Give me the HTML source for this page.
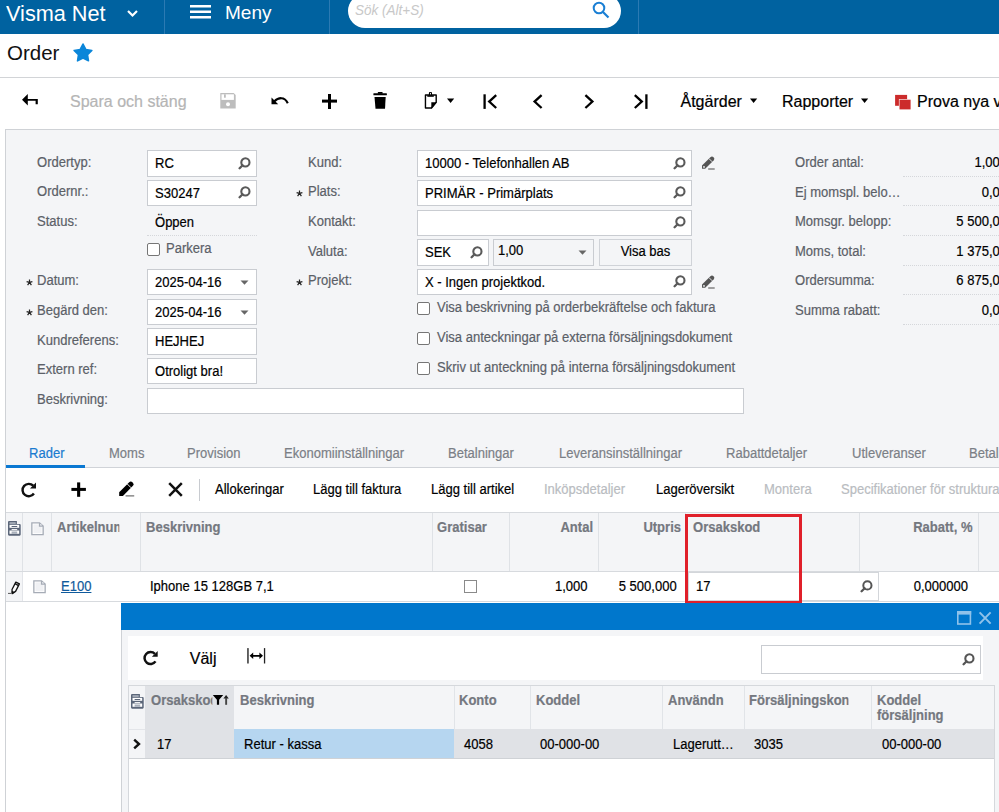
<!DOCTYPE html>
<html><head><meta charset="utf-8">
<style>
*{box-sizing:border-box;margin:0;padding:0}
html,body{width:999px;height:812px;overflow:hidden;background:#fff;font-family:"Liberation Sans",sans-serif;color:#000}
.a{position:absolute;white-space:nowrap}
#hdr{left:0;top:0;width:999px;height:34px;background:#0062a0}
.sep{position:absolute;top:0;width:1px;height:34px;background:#2b7ab3}
.t13{font-size:14px;line-height:15px;transform:scaleX(.93);transform-origin:0 0}
.t16{font-size:16px;line-height:18px}
.lbl{color:#5b6067}
.inp{position:absolute;background:#fff;border:1px solid #c9ccd1;height:26px}
.itx{position:absolute;font-size:14px;line-height:15px;color:#000;transform:scaleX(.93);transform-origin:0 0}
.dot{position:absolute;height:1px;border-top:1px dotted #d5d7db}
svg{position:absolute;display:block}
.a,.itx{-webkit-text-stroke:0.2px currentColor}
</style></head><body>
<!-- header -->
<div id="hdr" class="a"></div>
<div class="a" style="left:6px;top:1px;font-size:22px;line-height:25px;color:#fff;-webkit-text-stroke:0;transform:scaleX(.985);transform-origin:0 0">Visma Net</div>
<svg style="left:126px;top:9px" width="13" height="9" viewBox="0 0 13 9"><path d="M2 2 L6.5 6.5 L11 2" fill="none" stroke="#fff" stroke-width="2.2"/></svg>
<div class="sep" style="left:164px"></div>
<svg style="left:190px;top:4px" width="22" height="15" viewBox="0 0 22 15"><rect x="0" y="1" width="21" height="2.5" fill="#fff"/><rect x="0" y="6.5" width="21" height="2.5" fill="#fff"/><rect x="0" y="12" width="21" height="2.5" fill="#fff"/></svg>
<div class="a" style="left:225px;top:2px;font-size:19px;line-height:22px;color:#fff;-webkit-text-stroke:0">Meny</div>
<div class="sep" style="left:329px"></div>
<div class="a" style="left:348px;top:-6px;width:273px;height:34px;background:#fff;border-radius:17px"></div>
<div class="a" style="left:355px;top:1px;font-size:15px;line-height:18px;color:#c8c8c8;-webkit-text-stroke:0;font-style:italic;transform:scaleX(.9);transform-origin:0 0">Sök (Alt+S)</div>
<svg style="left:591px;top:1px" width="20" height="19" viewBox="0 0 20 19"><circle cx="8" cy="7" r="5.3" fill="none" stroke="#1a7fd4" stroke-width="2"/><path d="M12 11 L17.5 16.5" stroke="#1a7fd4" stroke-width="2.2"/></svg>
<div class="sep" style="left:638px"></div>

<!-- title -->
<div class="a" style="left:7px;top:41px;font-size:20.5px;line-height:23px;color:#111;-webkit-text-stroke:0">Order</div>
<svg style="left:70.5px;top:40.6px" width="24" height="24" viewBox="0 0 24 24"><path d="M12.00 3.00 L14.79 8.46 L20.84 9.43 L16.52 13.77 L17.47 19.82 L12.00 17.05 L6.53 19.82 L7.48 13.77 L3.16 9.43 L9.21 8.46 Z" fill="#0b86d9" stroke="#0b86d9" stroke-width="1.6" stroke-linejoin="round"/></svg>
<div class="a" style="left:0;top:77px;width:999px;height:1px;background:#d2d4d7"></div>

<!-- toolbar -->
<svg style="left:20px;top:92px" width="20" height="16" viewBox="0 0 20 16"><path d="M2 7.8 L7.8 2 V6.9 H17.8 V12.3 H15.6 V8.8 H7.8 V13.5 Z" fill="#000"/></svg>
<div class="a t16" style="left:70px;top:92.5px;color:#b5b5b5">Spara och stäng</div>
<svg style="left:220px;top:93px" width="16" height="16" viewBox="0 0 16 16"><path d="M0.3 0 H13.7 L15.7 2 V15.5 H0.3 Z" fill="#bdbdbd"/><rect x="1.5" y="1.3" width="12.4" height="5.6" fill="#fff"/><rect x="4" y="1.3" width="1.8" height="3.4" fill="#bdbdbd"/><circle cx="8" cy="11.3" r="2" fill="#fff"/></svg>
<svg style="left:270px;top:95px" width="20" height="12" viewBox="0 0 20 12"><path d="M1.5 2.5 L1.5 9.3 L8.2 9.3 Z" fill="#000"/><path d="M4.2 6.4 C8 2.6 14.5 1 17.8 8.2" fill="none" stroke="#000" stroke-width="2.1"/></svg>
<svg style="left:321px;top:93px" width="17" height="17" viewBox="0 0 17 17"><rect x="1" y="6.6" width="15" height="3" fill="#000"/><rect x="7" y="1" width="3" height="15" fill="#000"/></svg>
<svg style="left:372px;top:91px" width="17" height="19" viewBox="0 0 17 19"><rect x="1.4" y="2.3" width="13.5" height="2" rx=".5" fill="#000"/><rect x="5.8" y="1.1" width="4.8" height="1.6" rx=".5" fill="#000"/><path d="M2.5 5.9 H13.7 L13 17.7 H3.5 Z" fill="#000"/></svg>
<svg style="left:423px;top:91px" width="16" height="19" viewBox="0 0 16 19"><path d="M2.45 3.95 H13.2 V11.3 L8.5 16.95 H2.45 Z" fill="#fff" stroke="#000" stroke-width="1.4" stroke-linejoin="round"/><path d="M8.3 11.3 H13.9 L8.3 17.65 Z" fill="#000"/><rect x="4.3" y="4.2" width="6.5" height="1.6" fill="#000"/><rect x="5.9" y="1" width="3.1" height="3.6" rx="1" fill="#000"/><rect x="7" y="1.9" width=".9" height="1.5" fill="#fff"/></svg>
<svg style="left:446px;top:98px" width="9" height="6" viewBox="0 0 9 6"><path d="M1 0.6 H8.2 L4.6 5 Z" fill="#000"/></svg>
<svg style="left:482px;top:93px" width="17" height="17" viewBox="0 0 17 17"><path d="M2.6 1.3 V15.9" stroke="#000" stroke-width="2.3" fill="none"/><path d="M14.2 2.2 L7.2 8.6 L14.2 15" stroke="#000" stroke-width="2.3" fill="none"/></svg>
<svg style="left:531px;top:93px" width="14" height="17" viewBox="0 0 14 17"><path d="M10.6 2.2 L3.6 8.6 L10.6 15" stroke="#000" stroke-width="2.3" fill="none"/></svg>
<svg style="left:582px;top:93px" width="14" height="17" viewBox="0 0 14 17"><path d="M3.4 2.2 L10.4 8.6 L3.4 15" stroke="#000" stroke-width="2.3" fill="none"/></svg>
<svg style="left:632px;top:93px" width="17" height="17" viewBox="0 0 17 17"><path d="M14.4 1.3 V15.9" stroke="#000" stroke-width="2.3" fill="none"/><path d="M2.8 2.2 L9.8 8.6 L2.8 15" stroke="#000" stroke-width="2.3" fill="none"/></svg>
<div class="a t16" style="left:680.5px;top:92.5px;color:#000">Åtgärder</div>
<svg style="left:749px;top:98px" width="9" height="6" viewBox="0 0 9 6"><path d="M1 0.6 H8.2 L4.6 5 Z" fill="#000"/></svg>
<div class="a t16" style="left:782px;top:92.5px;color:#000">Rapporter</div>
<svg style="left:860px;top:98px" width="9" height="6" viewBox="0 0 9 6"><path d="M1 0.6 H8.2 L4.6 5 Z" fill="#000"/></svg>
<svg style="left:894px;top:93px" width="18" height="18" viewBox="0 0 18 18"><rect x="1.1" y="1.9" width="12" height="10.9" fill="#cc2b2b"/><rect x="4.9" y="6.1" width="12.3" height="10.9" fill="#fff"/><rect x="5.5" y="6.7" width="11.1" height="9.7" fill="#cc2b2b"/></svg>
<div class="a t16" style="left:917px;top:92.5px;color:#000">Prova nya versionen</div>


<!-- form panel -->
<div class="a" style="left:5px;top:129px;width:994px;height:339px;background:#f4f5f7;border-left:1px solid #cfd2d6;border-top:1px solid #cfd2d6"></div>
<div class="a t13 lbl" style="left:37px;top:155px">Ordertyp:</div>
<div class="a t13 lbl" style="left:37px;top:184px">Ordernr.:</div>
<div class="a t13 lbl" style="left:37px;top:214px">Status:</div>
<div class="a t13 lbl" style="left:37px;top:273px">Datum:</div><svg style="left:25.5px;top:278.5px" width="7" height="7" viewBox="0 0 7 7"><path d="M3.5 0.4 V3.4 M0.6 2.6 L3.5 3.4 L6.4 2.6 M1.6 6.2 L3.5 3.4 L5.4 6.2" stroke="#222" stroke-width="1.2" fill="none"/></svg>
<div class="a t13 lbl" style="left:37px;top:303px">Begärd den:</div><svg style="left:25.5px;top:308.5px" width="7" height="7" viewBox="0 0 7 7"><path d="M3.5 0.4 V3.4 M0.6 2.6 L3.5 3.4 L6.4 2.6 M1.6 6.2 L3.5 3.4 L5.4 6.2" stroke="#222" stroke-width="1.2" fill="none"/></svg>
<div class="a t13 lbl" style="left:37px;top:333px">Kundreferens:</div>
<div class="a t13 lbl" style="left:37px;top:362px">Extern ref:</div>
<div class="a t13 lbl" style="left:37px;top:392px">Beskrivning:</div>
<div class="inp" style="left:147px;top:150px;width:110px;height:27px;"></div><div class="itx" style="left:155px;top:155.7px">RC</div>
<svg style="left:238px;top:157px" width="13" height="13" viewBox="0 0 13 13"><circle cx="7.4" cy="5.4" r="4.1" fill="none" stroke="#5a5a5a" stroke-width="2.1"/><path d="M4.6 8.2 L1.6 11.2" stroke="#5a5a5a" stroke-width="2.3" stroke-linecap="round"/></svg>
<div class="inp" style="left:147px;top:180px;width:110px;height:26px;"></div><div class="itx" style="left:155px;top:185.7px">S30247</div>
<svg style="left:238px;top:186px" width="13" height="13" viewBox="0 0 13 13"><circle cx="7.4" cy="5.4" r="4.1" fill="none" stroke="#5a5a5a" stroke-width="2.1"/><path d="M4.6 8.2 L1.6 11.2" stroke="#5a5a5a" stroke-width="2.3" stroke-linecap="round"/></svg>
<div class="a t13" style="left:155px;top:215px;color:#000">Öppen</div>
<div class="dot" style="left:147px;top:235px;width:110px"></div>
<div class="a" style="left:147px;top:243px;width:13px;height:13px;border:1px solid #767676;border-radius:2px;background:#fff"></div>
<div class="a t13 lbl" style="left:165.5px;top:240.5px">Parkera</div>
<div class="inp" style="left:147px;top:269px;width:110px;height:26px;"></div><div class="itx" style="left:155px;top:274.7px">2025-04-16</div>
<svg style="left:240px;top:280px" width="9" height="6" viewBox="0 0 9 6"><path d="M0.5 0.5 H8.5 L4.5 4.8 Z" fill="#666"/></svg>
<div class="inp" style="left:147px;top:299px;width:110px;height:26px;"></div><div class="itx" style="left:155px;top:304.7px">2025-04-16</div>
<svg style="left:240px;top:310px" width="9" height="6" viewBox="0 0 9 6"><path d="M0.5 0.5 H8.5 L4.5 4.8 Z" fill="#666"/></svg>
<div class="inp" style="left:147px;top:328px;width:110px;height:27px;"></div><div class="itx" style="left:155px;top:333.7px">HEJHEJ</div>
<div class="inp" style="left:147px;top:358px;width:110px;height:26px;"></div><div class="itx" style="left:155px;top:363.7px">Otroligt bra!</div>
<div class="inp" style="left:147px;top:388px;width:597px;height:26px;"></div>
<div class="a t13 lbl" style="left:307.5px;top:155px">Kund:</div>
<div class="a t13 lbl" style="left:307.5px;top:184px">Plats:</div><svg style="left:296.0px;top:189.5px" width="7" height="7" viewBox="0 0 7 7"><path d="M3.5 0.4 V3.4 M0.6 2.6 L3.5 3.4 L6.4 2.6 M1.6 6.2 L3.5 3.4 L5.4 6.2" stroke="#222" stroke-width="1.2" fill="none"/></svg>
<div class="a t13 lbl" style="left:307.5px;top:214px">Kontakt:</div>
<div class="a t13 lbl" style="left:307.5px;top:244px">Valuta:</div>
<div class="a t13 lbl" style="left:307.5px;top:273px">Projekt:</div><svg style="left:296.0px;top:278.5px" width="7" height="7" viewBox="0 0 7 7"><path d="M3.5 0.4 V3.4 M0.6 2.6 L3.5 3.4 L6.4 2.6 M1.6 6.2 L3.5 3.4 L5.4 6.2" stroke="#222" stroke-width="1.2" fill="none"/></svg>
<div class="inp" style="left:417px;top:150px;width:275px;height:27px;"></div><div class="itx" style="left:425px;top:155.7px">10000 - Telefonhallen AB</div>
<svg style="left:673px;top:157px" width="13" height="13" viewBox="0 0 13 13"><circle cx="7.4" cy="5.4" r="4.1" fill="none" stroke="#5a5a5a" stroke-width="2.1"/><path d="M4.6 8.2 L1.6 11.2" stroke="#5a5a5a" stroke-width="2.3" stroke-linecap="round"/></svg>
<svg style="left:701px;top:155.5px" width="15" height="15" viewBox="0 0 15 15"><path d="M1 9.6 L9.4 1.2 A2.25 2.25 0 0 1 12.58 4.38 L4.2 12.8 H1 Z" fill="#555"/><path d="M8 2.6 L11.2 5.8" stroke="#f4f5f7" stroke-width=".9"/><circle cx="3" cy="10.9" r=".9" fill="#f4f5f7"/><rect x="7.2" y="12.2" width="6.5" height="1.6" fill="#8a8a8a"/></svg>
<div class="inp" style="left:417px;top:180px;width:275px;height:26px;"></div><div class="itx" style="left:425px;top:185.7px">PRIMÄR - Primärplats</div>
<svg style="left:673px;top:186px" width="13" height="13" viewBox="0 0 13 13"><circle cx="7.4" cy="5.4" r="4.1" fill="none" stroke="#5a5a5a" stroke-width="2.1"/><path d="M4.6 8.2 L1.6 11.2" stroke="#5a5a5a" stroke-width="2.3" stroke-linecap="round"/></svg>
<div class="inp" style="left:417px;top:210px;width:275px;height:26px;"></div>
<svg style="left:673px;top:216px" width="13" height="13" viewBox="0 0 13 13"><circle cx="7.4" cy="5.4" r="4.1" fill="none" stroke="#5a5a5a" stroke-width="2.1"/><path d="M4.6 8.2 L1.6 11.2" stroke="#5a5a5a" stroke-width="2.3" stroke-linecap="round"/></svg>
<div class="inp" style="left:417px;top:239px;width:72px;height:27px;"></div><div class="itx" style="left:425px;top:244.7px">SEK</div>
<svg style="left:470px;top:246px" width="13" height="13" viewBox="0 0 13 13"><circle cx="7.4" cy="5.4" r="4.1" fill="none" stroke="#5a5a5a" stroke-width="2.1"/><path d="M4.6 8.2 L1.6 11.2" stroke="#5a5a5a" stroke-width="2.3" stroke-linecap="round"/></svg>
<div class="inp" style="left:493px;top:239px;width:101px;height:27px;background:#f4f5f7"></div>
<div class="a t13" style="left:497.5px;top:242.5px;color:#000">1,00</div>
<svg style="left:578px;top:250px" width="9" height="6" viewBox="0 0 9 6"><path d="M0.5 0.5 H8.5 L4.5 4.8 Z" fill="#666"/></svg>
<div class="a" style="left:599px;top:239px;width:93px;height:27px;border:1px solid #d0d3d8;background:#f4f5f7"></div><div class="a t13" style="left:599px;top:244px;width:93px;text-align:center;transform-origin:50% 0;color:#000">Visa bas</div>
<div class="inp" style="left:417px;top:269px;width:275px;height:26px;"></div><div class="itx" style="left:425px;top:274.7px">X - Ingen projektkod.</div>
<svg style="left:673px;top:275px" width="13" height="13" viewBox="0 0 13 13"><circle cx="7.4" cy="5.4" r="4.1" fill="none" stroke="#5a5a5a" stroke-width="2.1"/><path d="M4.6 8.2 L1.6 11.2" stroke="#5a5a5a" stroke-width="2.3" stroke-linecap="round"/></svg>
<svg style="left:701px;top:274.5px" width="15" height="15" viewBox="0 0 15 15"><path d="M1 9.6 L9.4 1.2 A2.25 2.25 0 0 1 12.58 4.38 L4.2 12.8 H1 Z" fill="#555"/><path d="M8 2.6 L11.2 5.8" stroke="#f4f5f7" stroke-width=".9"/><circle cx="3" cy="10.9" r=".9" fill="#f4f5f7"/><rect x="7.2" y="12.2" width="6.5" height="1.6" fill="#8a8a8a"/></svg>
<div class="a" style="left:417px;top:302px;width:13px;height:13px;border:1px solid #767676;border-radius:2px;background:#fff"></div>
<div class="a t13 lbl" style="left:436.5px;top:299.5px">Visa beskrivning på orderbekräftelse och faktura</div>
<div class="a" style="left:417px;top:332px;width:13px;height:13px;border:1px solid #767676;border-radius:2px;background:#fff"></div>
<div class="a t13 lbl" style="left:436.5px;top:329.5px">Visa anteckningar på externa försäljningsdokument</div>
<div class="a" style="left:417px;top:362px;width:13px;height:13px;border:1px solid #767676;border-radius:2px;background:#fff"></div>
<div class="a t13 lbl" style="left:436.5px;top:359.5px">Skriv ut anteckning på interna försäljningsdokument</div>
<div class="a t13 lbl" style="left:794.5px;top:155px">Order antal:</div>
<div class="a t13" style="left:880px;top:155px;width:127px;text-align:right;transform-origin:100% 0;color:#000">1,000</div>
<div class="dot" style="left:903px;top:176px;width:96px"></div>
<div class="a t13 lbl" style="left:794.5px;top:185px">Ej momspl. belo…</div>
<div class="a t13" style="left:880px;top:185px;width:127px;text-align:right;transform-origin:100% 0;color:#000">0,00</div>
<div class="dot" style="left:903px;top:205px;width:96px"></div>
<div class="a t13 lbl" style="left:794.5px;top:214px">Momsgr. belopp:</div>
<div class="a t13" style="left:880px;top:214px;width:127px;text-align:right;transform-origin:100% 0;color:#000">5 500,00</div>
<div class="dot" style="left:903px;top:235px;width:96px"></div>
<div class="a t13 lbl" style="left:794.5px;top:244px">Moms, total:</div>
<div class="a t13" style="left:880px;top:244px;width:127px;text-align:right;transform-origin:100% 0;color:#000">1 375,00</div>
<div class="dot" style="left:903px;top:265px;width:96px"></div>
<div class="a t13 lbl" style="left:794.5px;top:273px">Ordersumma:</div>
<div class="a t13" style="left:880px;top:273px;width:127px;text-align:right;transform-origin:100% 0;color:#000">6 875,00</div>
<div class="dot" style="left:903px;top:294px;width:96px"></div>
<div class="a t13 lbl" style="left:794.5px;top:303px">Summa rabatt:</div>
<div class="a t13" style="left:880px;top:303px;width:127px;text-align:right;transform-origin:100% 0;color:#000">0,00</div>
<div class="dot" style="left:903px;top:324px;width:96px"></div>
<!-- tabs / grid -->
<div class="a" style="left:5px;top:468px;width:1px;height:344px;background:#cfd2d6"></div>
<div class="a t13" style="left:29.3px;top:446px;color:#1a7bd0">Rader</div>
<div class="a t13" style="left:108.5px;top:446px;color:#7b7f86">Moms</div>
<div class="a t13" style="left:186.5px;top:446px;color:#7b7f86">Provision</div>
<div class="a t13" style="left:283.5px;top:446px;color:#7b7f86">Ekonomiinställningar</div>
<div class="a t13" style="left:448px;top:446px;color:#7b7f86">Betalningar</div>
<div class="a t13" style="left:558.5px;top:446px;color:#7b7f86">Leveransinställningar</div>
<div class="a t13" style="left:726px;top:446px;color:#7b7f86">Rabattdetaljer</div>
<div class="a t13" style="left:851.5px;top:446px;color:#7b7f86">Utleveranser</div>
<div class="a t13" style="left:968.5px;top:446px;color:#7b7f86">Betalningsplan</div>
<div class="a" style="left:6px;top:467px;width:993px;height:1px;background:#d0d3d8"></div>
<div class="a" style="left:6px;top:465px;width:79px;height:3px;background:#0a78d2"></div>
<div class="a" style="left:6px;top:468px;width:993px;height:44px;background:#fff"></div>
<svg style="left:20px;top:481px" width="18" height="18" viewBox="0 0 18 18"><path d="M13.2 4.7 A6.2 6.2 0 1 0 13.9 12.5" fill="none" stroke="#111" stroke-width="2.4"/><path d="M16 1.6 V7.6 H10 Z" fill="#111"/></svg>
<svg style="left:70px;top:481px" width="17" height="17" viewBox="0 0 17 17"><rect x="1.4" y="6.9" width="14.5" height="3" fill="#000"/><rect x="7.1" y="1.4" width="3.1" height="14.4" fill="#000"/></svg>
<svg style="left:118px;top:481px" width="17.5" height="17.5" viewBox="0 0 15 15"><path d="M1 9.6 L9.4 1.2 A2.25 2.25 0 0 1 12.58 4.38 L4.2 12.8 H1 Z" fill="#000"/><path d="M8 2.6 L11.2 5.8" stroke="#fff" stroke-width=".8"/><rect x="6.5" y="12.2" width="7.4" height="1.1" fill="#777"/></svg>
<svg style="left:167px;top:481px" width="17" height="17" viewBox="0 0 17 17"><path d="M2.2 2.2 L14.8 14.8 M14.8 2.2 L2.2 14.8" stroke="#111" stroke-width="2.5"/></svg>
<div class="a" style="left:199px;top:479px;width:1px;height:22px;background:#c8cbd0"></div>
<div class="a t13" style="left:215px;top:481.5px;color:#000">Allokeringar</div>
<div class="a t13" style="left:313px;top:481.5px;color:#000">Lägg till faktura</div>
<div class="a t13" style="left:431px;top:481.5px;color:#000">Lägg till artikel</div>
<div class="a t13" style="left:544px;top:481.5px;color:#b9bcc1">Inköpsdetaljer</div>
<div class="a t13" style="left:655.5px;top:481.5px;color:#000">Lageröversikt</div>
<div class="a t13" style="left:763.5px;top:481.5px;color:#b9bcc1">Montera</div>
<div class="a t13" style="left:840.5px;top:481.5px;color:#b9bcc1">Specifikationer för strukturartiklar</div>
<div class="a" style="left:6px;top:512px;width:993px;height:1px;background:#d7dade"></div>
<div class="a" style="left:6px;top:513px;width:993px;height:58px;background:#f4f5f7"></div>
<div class="a" style="left:6px;top:571px;width:993px;height:1px;background:#d7dade"></div>
<div class="a" style="left:22px;top:513px;width:1px;height:58px;background:#dfe2e6"></div>
<div class="a" style="left:51px;top:513px;width:1px;height:58px;background:#dfe2e6"></div>
<div class="a" style="left:140px;top:513px;width:1px;height:58px;background:#dfe2e6"></div>
<div class="a" style="left:432px;top:513px;width:1px;height:58px;background:#dfe2e6"></div>
<div class="a" style="left:509px;top:513px;width:1px;height:58px;background:#dfe2e6"></div>
<div class="a" style="left:598px;top:513px;width:1px;height:58px;background:#dfe2e6"></div>
<div class="a" style="left:685px;top:513px;width:1px;height:58px;background:#dfe2e6"></div>
<div class="a" style="left:859px;top:513px;width:1px;height:58px;background:#dfe2e6"></div>
<div class="a" style="left:978px;top:513px;width:1px;height:58px;background:#dfe2e6"></div>
<div class="a" style="left:22px;top:572px;width:1px;height:29px;background:#e3e5e9"></div>
<div class="a" style="left:6px;top:572px;width:16px;height:29px;background:#f4f5f7"></div>
<div class="a" style="left:6px;top:601px;width:993px;height:1px;background:#d7dade"></div>
<div class="a t13" style="left:57px;top:520px;width:66.7px;overflow:hidden;font-weight:bold;color:#74787f">Artikelnummer</div>
<div class="a t13" style="left:146px;top:520px;font-weight:bold;color:#74787f">Beskrivning</div>
<div class="a t13" style="left:437px;top:520px;font-weight:bold;color:#74787f">Gratisar</div>
<div class="a t13" style="left:520px;top:520px;width:73px;text-align:right;transform-origin:100% 0;font-weight:bold;color:#74787f">Antal</div>
<div class="a t13" style="left:600px;top:520px;width:81px;text-align:right;transform-origin:100% 0;font-weight:bold;color:#74787f">Utpris</div>
<div class="a t13" style="left:692.5px;top:520px;font-weight:bold;color:#74787f">Orsakskod</div>
<div class="a t13" style="left:860px;top:520px;width:112.5px;text-align:right;transform-origin:100% 0;font-weight:bold;color:#74787f">Rabatt, %</div>
<svg style="left:8.25px;top:521.1px" width="13" height="15" viewBox="0 0 13 15"><path d="M1.1 0 H8.9 V3 H11.6 A1.1 1.1 0 0 1 12.7 4.1 V13.6 A1.1 1.1 0 0 1 11.6 14.7 H1.1 A1.1 1.1 0 0 1 0 13.6 V1.1 A1.1 1.1 0 0 1 1.1 0 Z" fill="#5b6679"/><rect x="1.5" y="1.2" width="6.2" height="1.7" fill="#aab1bc"/><rect x="1.5" y="3.8" width="9.7" height="3" fill="#fff"/><rect x="3.6" y="5" width="5.6" height="1" fill="#5b6679"/><rect x="3.6" y="8.1" width="5.6" height="1" fill="#fff"/><rect x="1.5" y="9.5" width="9.7" height="3.3" fill="#fff"/><rect x="3.6" y="10.5" width="5.6" height="2.3" fill="#aab1bc"/></svg>
<svg style="left:31px;top:521.7px" width="14" height="14" viewBox="0 0 14 14"><path d="M0.85 0.85 H8.5 L12.15 4.1 V12.65 H0.85 Z" fill="#fff" stroke="#a6acb6" stroke-width="1.3"/><rect x="2.4" y="2.4" width="8.2" height="8.8" fill="#f0f1f4"/><path d="M8.5 1 V4.1 H12" fill="none" stroke="#a6acb6" stroke-width="1.2"/></svg>
<svg style="left:7px;top:581px" width="14" height="14" viewBox="0 0 14 14"><path d="M5.2 12.6 L5.01 8.57 L8.82 1.09 L12.38 2.91 L8.57 10.39 Z" fill="#fff" stroke="#111" stroke-width="1.3" stroke-linejoin="round"/><path d="M8.0 2.69 L11.56 4.51" stroke="#111" stroke-width="1.4"/><path d="M5.2 12.6 L5.1 10.3 L7.3 11.3 Z" fill="#111" stroke="#111" stroke-width=".8"/><path d="M1 12.4 H4.3" stroke="#555" stroke-width="1"/></svg>
<svg style="left:33px;top:579.6px" width="14" height="14" viewBox="0 0 14 14"><path d="M0.85 0.85 H8.5 L12.15 4.1 V12.65 H0.85 Z" fill="#fff" stroke="#a6acb6" stroke-width="1.3"/><rect x="2.4" y="2.4" width="8.2" height="8.8" fill="#f0f1f4"/><path d="M8.5 1 V4.1 H12" fill="none" stroke="#a6acb6" stroke-width="1.2"/></svg>
<div class="a t13" style="left:61.3px;top:578.5px;color:#105a9c;text-decoration:underline">E100</div>
<div class="a t13" style="left:150.4px;top:578.5px;color:#000">Iphone 15 128GB 7,1</div>
<div class="a" style="left:464px;top:580px;width:13px;height:13px;border:1px solid #8a8a8a;background:#fff"></div>
<div class="a t13" style="left:520px;top:578.5px;width:67.6px;text-align:right;transform-origin:100% 0;color:#000">1,000</div>
<div class="a t13" style="left:600px;top:578.5px;width:76.7px;text-align:right;transform-origin:100% 0;color:#000">5 500,000</div>
<div class="a" style="left:688px;top:572px;width:191px;height:29px;background:#fff;border:1px solid #d3d6da"></div>
<div class="a t13" style="left:696.4px;top:578.5px;color:#000">17</div>
<svg style="left:859.5px;top:579.5px" width="13" height="13" viewBox="0 0 13 13"><circle cx="7.4" cy="5.4" r="4.1" fill="none" stroke="#555" stroke-width="2"/><path d="M4.6 8.2 L1.6 11.2" stroke="#555" stroke-width="2.3" stroke-linecap="round"/></svg>
<div class="a t13" style="left:880px;top:578.5px;width:88px;text-align:right;transform-origin:100% 0;color:#000">0,000000</div>
<div class="a" style="left:685px;top:514px;width:117px;height:90px;border:3px solid #e0202a"></div>

<!-- modal -->
<div class="a" style="left:121px;top:603px;width:878px;height:209px;background:#f4f5f7;border-left:1px solid #cfd2d6"></div>
<div class="a" style="left:121px;top:603px;width:878px;height:27px;background:#0077cc"></div>
<svg style="left:956px;top:610px" width="16" height="16" viewBox="0 0 16 16"><rect x="1.8" y="1.8" width="12.6" height="12.2" fill="none" stroke="#8fc2ea" stroke-width="1.6"/><rect x="1" y="1" width="14.2" height="3.6" fill="#8fc2ea"/></svg>
<svg style="left:977px;top:610px" width="16" height="16" viewBox="0 0 16 16"><path d="M2.6 2.4 L13.6 13.6 M13.6 2.4 L2.6 13.6" stroke="#8fc2ea" stroke-width="2"/></svg>
<div class="a" style="left:128px;top:636px;width:855px;height:44px;background:#fff"></div>
<svg style="left:142px;top:649px" width="18" height="18" viewBox="0 0 18 18"><path d="M12.9 4.9 A6 6 0 1 0 13.5 12.4" fill="none" stroke="#111" stroke-width="2.5"/><path d="M15.7 1.9 V7.7 H9.9 Z" fill="#111"/></svg>
<div class="a t16" style="left:189.8px;top:650.3px;color:#000">Välj</div>
<svg style="left:246px;top:647px" width="20" height="18" viewBox="0 0 20 18"><rect x="1.2" y="1.1" width="1.5" height="15.4" fill="#333"/><rect x="17.9" y="1.1" width="1.3" height="15.4" fill="#222"/><path d="M3.6 8.8 L7.2 5.6 V7.9 H13.4 V5.6 L17 8.8 L13.4 12 V9.8 H7.2 V12 Z" fill="#000"/></svg>
<div class="a" style="left:761px;top:645px;width:220px;height:29px;background:#fff;border:1px solid #c9ccd1"></div>
<svg style="left:961.5px;top:653px" width="13" height="13" viewBox="0 0 13 13"><circle cx="7.4" cy="5.4" r="4.1" fill="none" stroke="#555" stroke-width="2.1"/><path d="M4.6 8.2 L1.6 11.2" stroke="#555" stroke-width="2.3" stroke-linecap="round"/></svg>
<div class="a" style="left:128px;top:685px;width:867px;height:127px;background:#fff;border:1px solid #d5d8dc;border-bottom:none"></div>
<div class="a" style="left:129px;top:686px;width:865px;height:43px;background:#f4f5f7"></div>
<div class="a" style="left:145px;top:686px;width:89px;height:72px;background:#e0e2e6"></div>
<div class="a" style="left:129px;top:729px;width:16px;height:29px;background:#f4f5f7;border-top:1px solid #e3e5e9"></div>
<div class="a" style="left:234px;top:729px;width:760px;height:29px;background:#e0e2e6"></div>
<div class="a" style="left:234px;top:729px;width:220px;height:29px;background:#b6d6f0"></div>
<div class="a" style="left:129px;top:758px;width:865px;height:1px;background:#cfd2d6"></div>
<div class="a" style="left:454px;top:686px;width:1px;height:43px;background:#e1e4e8"></div>
<div class="a" style="left:530px;top:686px;width:1px;height:43px;background:#e1e4e8"></div>
<div class="a" style="left:662px;top:686px;width:1px;height:43px;background:#e1e4e8"></div>
<div class="a" style="left:744px;top:686px;width:1px;height:43px;background:#e1e4e8"></div>
<div class="a" style="left:871px;top:686px;width:1px;height:43px;background:#e1e4e8"></div>
<svg style="left:131.3px;top:694.1px" width="13" height="15" viewBox="0 0 13 15"><path d="M1.1 0 H8.9 V3 H11.6 A1.1 1.1 0 0 1 12.7 4.1 V13.6 A1.1 1.1 0 0 1 11.6 14.7 H1.1 A1.1 1.1 0 0 1 0 13.6 V1.1 A1.1 1.1 0 0 1 1.1 0 Z" fill="#5b6679"/><rect x="1.5" y="1.2" width="6.2" height="1.7" fill="#aab1bc"/><rect x="1.5" y="3.8" width="9.7" height="3" fill="#fff"/><rect x="3.6" y="5" width="5.6" height="1" fill="#5b6679"/><rect x="3.6" y="8.1" width="5.6" height="1" fill="#fff"/><rect x="1.5" y="9.5" width="9.7" height="3.3" fill="#fff"/><rect x="3.6" y="10.5" width="5.6" height="2.3" fill="#aab1bc"/></svg>
<div class="a t13" style="left:151.2px;top:692.5px;width:66.1px;overflow:hidden;font-weight:bold;color:#74787f">Orsakskod</div>
<svg style="left:212px;top:694px" width="18" height="12" viewBox="0 0 18 12"><path d="M0.8 1 H11.2 L7.1 5.8 V10.8 H4.9 V5.8 Z" fill="#000"/><path d="M11.4 4.6 L14.1 1 L16.8 4.6 Z" fill="#222"/><rect x="13.2" y="4" width="1.9" height="6.8" fill="#444"/></svg>
<div class="a t13" style="left:240px;top:692.5px;font-weight:bold;color:#74787f">Beskrivning</div>
<div class="a t13" style="left:459px;top:692.5px;font-weight:bold;color:#74787f">Konto</div>
<div class="a t13" style="left:536px;top:692.5px;font-weight:bold;color:#74787f">Koddel</div>
<div class="a t13" style="left:667.8px;top:692.5px;width:60.2px;overflow:hidden;font-weight:bold;color:#74787f">Användning</div>
<div class="a t13" style="left:749.4px;top:692.5px;width:107px;overflow:hidden;font-weight:bold;color:#74787f">Försäljningskonto</div>
<div class="a" style="left:877.2px;top:692.5px;font-size:14px;line-height:15px;transform:scaleX(.93);transform-origin:0 0;white-space:normal;width:110px;font-weight:bold;color:#74787f">Koddel<br>försäljning</div>
<svg style="left:132px;top:738px" width="10" height="12" viewBox="0 0 10 12"><path d="M2.2 1.6 L7 6 L2.2 10.4" fill="none" stroke="#111" stroke-width="2.4"/></svg>
<div class="a t13" style="left:156.5px;top:736.5px;color:#000">17</div>
<div class="a t13" style="left:243.6px;top:736.5px;color:#000">Retur - kassa</div>
<div class="a t13" style="left:463.8px;top:736.5px;color:#000">4058</div>
<div class="a t13" style="left:540.3px;top:736.5px;color:#000">00-000-00</div>
<div class="a t13" style="left:672.6px;top:736.5px;color:#000">Lagerutt…</div>
<div class="a t13" style="left:753.9px;top:736.5px;color:#000">3035</div>
<div class="a t13" style="left:881.7px;top:736.5px;color:#000">00-000-00</div>
</body></html>
